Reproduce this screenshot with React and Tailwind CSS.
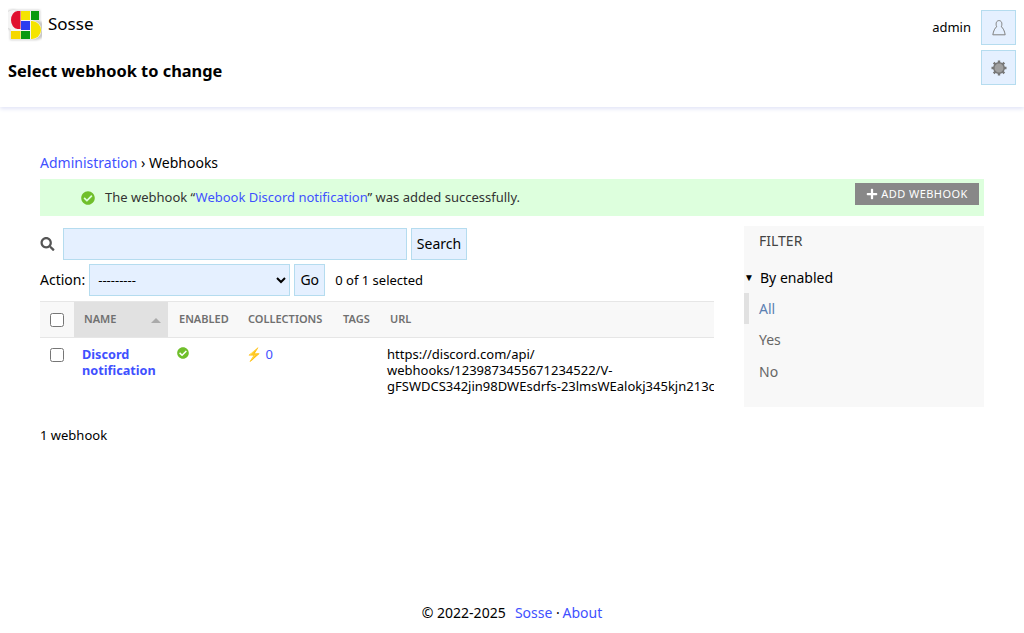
import React from "react";
import { FaCheckCircle, FaSearch, FaPlus } from "react-icons/fa";

const Logo = () => {
  const shapes = (
    <>
      <path d="M12.500 3 H9.500 a6.500 9 0 0 0 0 18 h3z" fill="#e0102f" />
      <rect x="13" y="3" width="9" height="9" fill="#f5e400" />
      <rect x="23" y="3" width="8" height="9" fill="#0a9a10" />
      <rect x="13" y="13" width="9" height="9" fill="#2a3cf0" />
      <path d="M23 13 h1 a9 9 0 0 1 0 18 h-1z" fill="#f5e400" />
      <rect x="3" y="23" width="9.500" height="8" fill="#f5d800" />
      <rect x="13" y="23" width="9" height="8" fill="#0a9a10" />
    </>
  );
  return (
    <svg width="34" height="34" viewBox="0 0 34 34">
      <defs>
        <filter id="halo" x="-20%" y="-20%" width="140%" height="140%">
          <feGaussianBlur stdDeviation="1" />
        </filter>
      </defs>
      <path d="M9 2 H32 V12 H28 a10 10 0 0 1 0 20 H2 V22 a10 10 0 0 1 7 -20z" fill="#c8c8c8" filter="url(#halo)" />
      <path d="M9 2.500 H31.500 V12.500 H24 a9.500 9.500 0 0 1 0 19 H2.500 V21 a9.500 9.500 0 0 1 6.500 -18.500z" fill="#f4f4f4" />
      {shapes}
    </svg>
  );
};

const UserIcon = () => (
  <svg width="14" height="16" viewBox="0 0 14 16" fill="none" stroke="#808080" strokeWidth="1">
    <path d="M4.600 6.800 C3.400 3 4.600 .6 7 .6 S10.600 3 9.400 6.800 C11 8 12.600 11 13.200 14.800 H.8 C1.400 11 3 8 4.600 6.800Z" strokeLinejoin="round" />
  </svg>
);

const GearIcon = () => (
  <svg width="16" height="16" viewBox="0 0 16 16">
    <circle cx="8" cy="8" r="5.200" fill="#a0a0a0" stroke="#777" strokeWidth="1.500" />
    <g stroke="#777" strokeWidth="2.400">
      <path d="M8 .5v2.500M8 13v2.500M.5 8h2.500M13 8h2.500M2.700 2.700l1.800 1.800M11.500 11.500l1.800 1.800M13.300 2.700l-1.800 1.800M4.500 11.500l-1.800 1.800" />
    </g>
  </svg>
);

const linkBlue = "text-[#3f51ff]";
const fieldCls = "bg-[#e5f0ff] border border-[#b5dcef]";

const App = () => {
  return (
    <div className="min-h-[633px] bg-white text-[14px] text-black font-['Noto_Sans',sans-serif] flex flex-col">
      {/* Header */}
      <header className="h-[107px] flex justify-between pl-2 pr-2 shadow-[0_2px_4px_#e2e5f7]">
        <div>
          <div className="flex items-center gap-[6px] h-[50px]">
            <Logo />
            <span className="text-[17px] leading-5 mb-[2px]">Sosse</span>
          </div>
          <h1 className="text-[16.4px] font-bold leading-[22px] mt-[10px]">Select webhook to change</h1>
        </div>
        <div className="flex gap-[10px] pt-[10px]">
          <span className="text-[13px] leading-[35px]">admin</span>
          <div className="flex flex-col gap-[5px]">
            <button className={`w-[35px] h-[35px] flex items-center justify-center ${fieldCls}`}><UserIcon /></button>
            <button className={`w-[35px] h-[35px] flex items-center justify-center ${fieldCls}`}><GearIcon /></button>
          </div>
        </div>
      </header>

      <main className="flex-1 px-10 pt-[46px]">
        <div className="leading-5"><a className={linkBlue}>Administration</a> › Webhooks</div>

        {/* Message */}
        <div className="mt-[6px] h-[37px] bg-[#ddffdd] flex justify-between pl-[41px] pr-[5px] pt-1 text-[13px] text-[#333]">
          <div className="flex items-center gap-[10px] h-[29px]">
            <FaCheckCircle className="text-[#70bf2b] text-[14px]" />
            <span>The webhook “<a className={linkBlue}>Webook Discord notification</a>” was added successfully.</span>
          </div>
          <a className="w-[124px] h-[22px] bg-[#888] text-white text-[11px] tracking-[0.45px] flex items-center justify-center gap-[3px]">
            <FaPlus className="text-[12px]" /> ADD WEBHOOK
          </a>
        </div>

        <div className="flex justify-between mt-[10px]">
          {/* Changelist */}
          <div className="w-[674px]">
            <div className="flex items-center h-8 mt-[2px]">
              <FaSearch className="text-[#555] text-[14px] w-[15px]" />
              <input className={`w-[344px] h-8 ml-2 ${fieldCls}`} />
              <button className={`w-14 h-8 ml-1 pb-[2px] ${fieldCls}`}>Search</button>
            </div>
            <div className="flex items-center h-8 mt-1">
              <span className="mb-[2px]">Action:</span>
              <select className={`w-[201px] h-8 ml-1 pl-1 text-[13px] ${fieldCls}`}>
                <option>---------</option>
              </select>
              <button className={`w-[31px] h-8 ml-1 pb-[2px] ${fieldCls}`}>Go</button>
              <span className="ml-[10px] mt-[2px] text-[13px]">0 of 1 selected</span>
            </div>

            <div className="mt-[5px] overflow-hidden">
              <table className="w-[674px] table-fixed border-collapse">
                <thead>
                  <tr className="h-[36px] bg-[#f8f8f8] border-y border-[#e6e6e6] text-[11px] font-semibold text-[#707070] text-left">
                    <th className="w-[34px] font-semibold pl-[10px]"><input type="checkbox" className="block w-[14px] h-[14px]" /></th>
                    <th className="w-[94px] bg-[#e1e1e1] font-semibold pl-[10px] relative">
                      NAME
                      <span className="absolute right-[7px] top-[16px] border-x-[5px] border-x-transparent border-b-[5px] border-b-[#aaa]"></span>
                    </th>
                    <th className="w-[70px] font-semibold pl-[11px]">ENABLED</th>
                    <th className="w-[94px] font-semibold pl-[10px]">COLLECTIONS</th>
                    <th className="w-[47px] font-semibold pl-[11px]">TAGS</th>
                    <th className="font-semibold pl-[11px]">URL</th>
                  </tr>
                </thead>
                <tbody className="text-[13px] leading-4 align-top">
                  <tr>
                    <td className="pl-[10px] pt-[10px]"><input type="checkbox" className="block w-[14px] h-[14px]" /></td>
                    <td className="pl-2 pt-2"><a className={`font-bold text-[12.7px] ${linkBlue}`}>Discord notification</a></td>
                    <td className="pl-[9px] pt-2"><FaCheckCircle className="text-[#70bf2b] text-[12px] mt-[1px]" /></td>
                    <td className="pl-2 pt-2">⚡ <a className={linkBlue}>0</a></td>
                    <td></td>
                    <td className="pl-2 pt-2 pb-[8px] whitespace-nowrap">
                      https://discord.com/api/<br />
                      webhooks/1239873455671234522/V-<br />
                      gFSWDCS342jin98DWEsdrfs-23lmsWEalokj345kjn213c
                    </td>
                  </tr>
                </tbody>
              </table>
            </div>
            <div className="text-[13px] mt-[23px] leading-5">1 webhook</div>
          </div>

          {/* Filter */}
          <aside className="w-60 h-[181px] bg-[#f8f8f8]">
            <h2 className="pl-[15px] pt-[5px] text-[14px] leading-5 text-[#444]">FILTER</h2>
            <div className="flex items-center mt-[16px] h-5 text-[14px]">
              <span className="w-4 text-[10px]">▼</span>
              <span>By enabled</span>
            </div>
            <ul className="mt-[6px] text-[14px]">
              <li className="h-[31px] pl-[10px] border-l-[5px] border-[#e1e1e1] leading-[31px] text-[#5b80b2]">All</li>
              <li className="h-[32px] pl-[15px] leading-[32px] text-[#666]">Yes</li>
              <li className="h-[31px] pl-[15px] leading-[31px] text-[#666]">No</li>
            </ul>
          </aside>
        </div>
      </main>

      <footer className="h-[30px] text-center leading-5">
        © 2022-2025 &nbsp;<a className={`ml-[2px] ${linkBlue}`}>Sosse</a> · <a className={`-ml-[1px] ${linkBlue}`}>About</a>
      </footer>
    </div>
  );
};

export default App;
